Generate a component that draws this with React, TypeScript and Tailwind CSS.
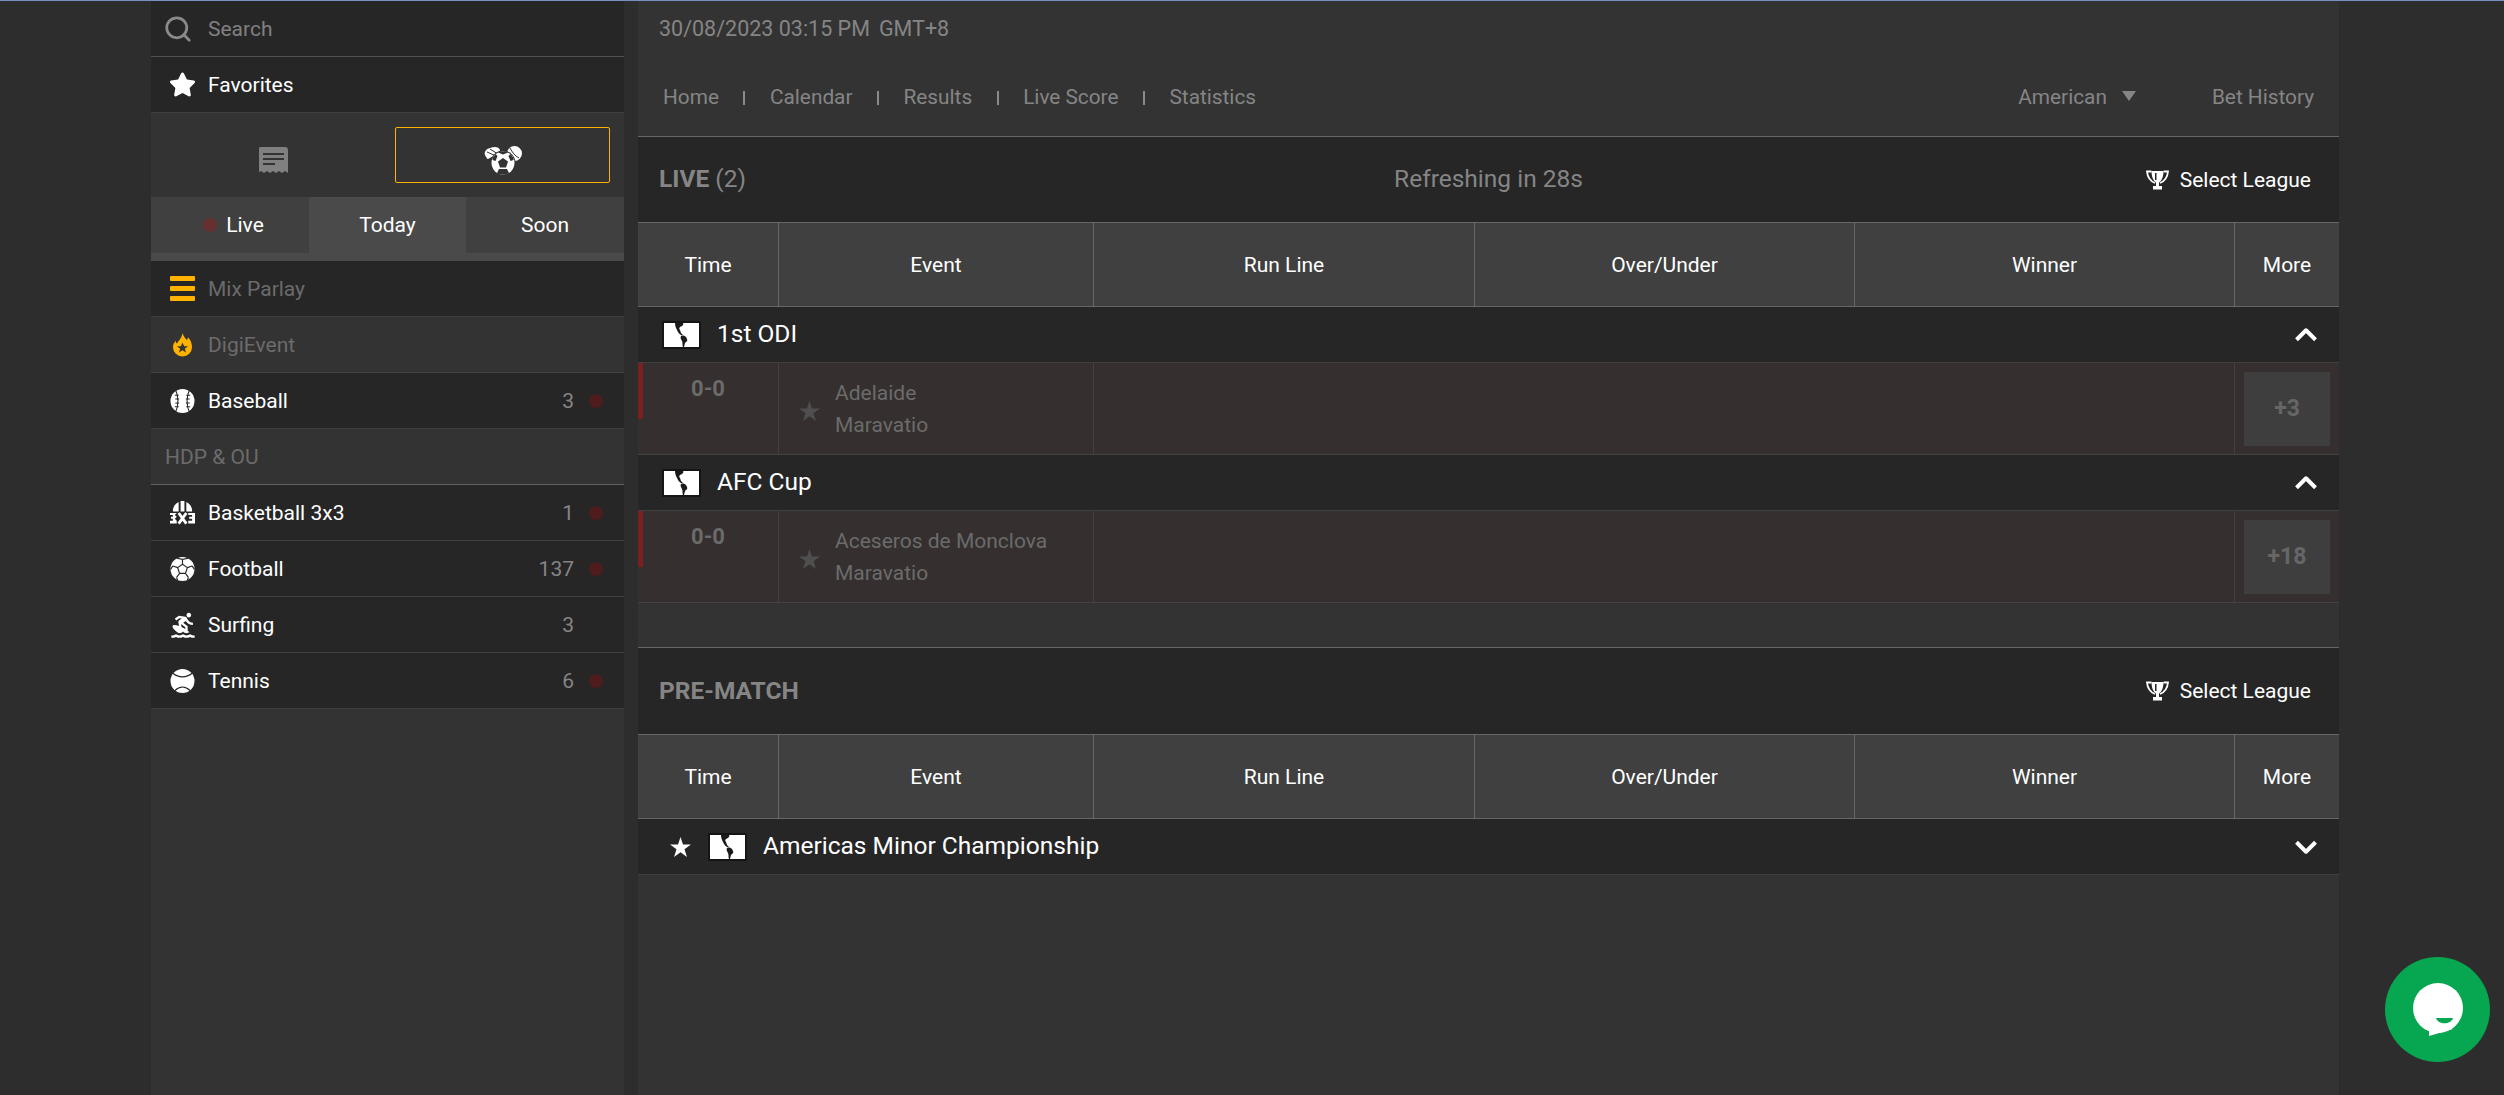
import { ChevronDown, ChevronUp, Search } from "lucide-react";
import { FaStar } from "react-icons/fa";
import { MdSurfing } from "react-icons/md";

const columns = ["Time", "Event", "Run Line", "Over/Under", "Winner", "More"];

function ReceiptIcon() {
    return (
        <svg viewBox="0 0 29 26" className="w-[29px] h-[26px]">
            <path fill="#808080" d="M3 0h23a3 3 0 0 1 3 3v23l-3-2-3 2-3-2-3 2-3-2-3 2-3-2-3 2-3-2-3 2V3a3 3 0 0 1 3-3z" />
            <path stroke="#333" strokeWidth="2" d="M4 7h21M4 12h21M4 17h12" />
        </svg>
    );
}

function SportsIcon() {
    return (
        <svg viewBox="0 0 38 29" className="w-[38px] h-[29px]">
            <path fill="#fff" d="M1 9c-1-3 1-6 5-7 5-2 9-1 10 2l-1 3-11 6C3 13 2 11 1 9z" />
            <path fill="none" stroke="#333" strokeWidth="1" d="M3 6l9 4M6 3l8 5" />
            <circle cx="30.500" cy="7.500" r="7.500" fill="#fff" />
            <path fill="none" stroke="#333" strokeWidth="1" d="M26 2c2 4 5 8 9 10" />
            <circle cx="19" cy="17" r="12.500" fill="#333" />
            <circle cx="19" cy="17" r="11.500" fill="#fff" />
            <path fill="#333" d="M19 12l5 3.500-2 6h-6l-2-6zM14 6.500l5 2 5-2-1-1h-8zM8.500 14l3 1 2-5-2-2-3 4zM29.500 14l-3 1-2-5 2-2 3 4zM13 27l2-4h8l2 4-3 1.500h-7z" />
        </svg>
    );
}

function FlameIcon() {
    return (
        <svg viewBox="0 0 20 25" className="w-[19px] h-[25px]">
            <path fill="#ffb300" d="M10 0c1 4 3 6 5 8 0-1 0-2 1-3 3 3 4 7 4 10.500a10 9.500 0 0 1-20 0c0-3 1-5 3-7 0 1 0 2 1 3 2-3 6-7 6-11.500z" />
            <path fill="#333" d="M10 10.500l1.700 3.800h4.100l-3.300 2.600 1.200 4.100-3.700-2.400-3.700 2.400 1.200-4.100-3.300-2.600h4.100z" />
        </svg>
    );
}

function BaseballIcon() {
    return (
        <svg viewBox="0 0 26 26" className="w-[26px] h-[26px]">
            <circle cx="13" cy="13" r="12.500" fill="#fff" />
            <path fill="none" stroke="#262626" strokeWidth="1.100" d="M6 2c3 6 3 16 0 22M20 2c-3 6-3 16 0 22" />
            <path fill="none" stroke="#262626" strokeWidth="1.100" d="M5 7h4M5.500 11h4M5.500 15h4M5 19h4M17 7h4M16.500 11h4M16.500 15h4M17 19h4" />
        </svg>
    );
}

function FootballIcon() {
    return (
        <svg viewBox="0 0 26 26" className="w-[26px] h-[26px]">
            <circle cx="13" cy="13" r="12.500" fill="#fff" />
            <path fill="none" stroke="#262626" strokeWidth="1.200" d="M13 8l5 3.600-1.900 5.900H9.900L8 11.600zM13 8V3M18 11.600l5-1.800M16.100 17.500l3 4.200M9.900 17.500l-3 4.200M8 11.600L3 9.800M7 1.800L13 3l6-1.200M23 9.800l2.400 3.600M19.100 21.700l-1 3.300M6.900 21.700l1 3.300M3 9.800L0.600 13.400" />
        </svg>
    );
}

function Basket3x3Icon() {
    return (
        <svg viewBox="0 0 26 25" className="w-[26px] h-[25px]">
            <path fill="#fff" d="M3 11.500a11 11 0 0 1 6-10V11.500zM11 0.500h4V11.500h-4zM17 1.500A11 11 0 0 1 23 11.500h-6z" />
            <path fill="#fff" d="M0 13h7l-2 2 2 2-2 2 2 2v3H0v-3h3v-2H1v-2h2v-2H0zM19 13h7v11h-7v-3h4v-2h-3v-2h3v-2h-4z" />
            <path stroke="#fff" strokeWidth="3" d="M9 13l8 11M17 13L9 24" />
        </svg>
    );
}

function TennisIcon() {
    return (
        <svg viewBox="0 0 26 26" className="w-[26px] h-[26px]">
            <circle cx="13" cy="13" r="12.500" fill="#fff" />
            <path fill="none" stroke="#262626" strokeWidth="1.200" d="M3 5c6 5 14 5 20 0M5 23c5-5 11-5 16 0" />
        </svg>
    );
}

function HamburgerIcon() {
    return (
        <div className="w-[25px] flex flex-col gap-[5px]">
            <div className="h-[5px] rounded-[1px] bg-[#ffb300]"></div>
            <div className="h-[5px] rounded-[1px] bg-[#ffb300]"></div>
            <div className="h-[5px] rounded-[1px] bg-[#ffb300]"></div>
        </div>
    );
}

function TrophyIcon() {
    return (
        <svg viewBox="0 0 23 20" className="w-[23px] h-[20px]">
            <path fill="none" stroke="#fff" strokeWidth="1.800" d="M5.500 1.500H1C1.500 7 4 11 9 13M17.500 1.500H22C21.500 7 19 11 14 13" />
            <path fill="#fff" d="M5.500 1h12c0 6-2 10-4.500 11.500V16h3v3.500H7V16h3v-3.500C7.500 11 5.500 7 5.500 1z" />
            <path fill="#262626" d="M9 3h1.500v7H9z" />
        </svg>
    );
}

function SharpStar({ color }: { color: string }) {
    return (
        <svg viewBox="0 0 22 21" className="w-[21px] h-[20px] shrink-0">
            <polygon fill={color} points="11,0 13.600,7.900 22,7.900 15.200,12.900 17.800,21 11,16 4.200,21 6.800,12.900 0,7.900 8.400,7.900" />
        </svg>
    );
}

function Flag() {
    return (
        <div className="w-[39px] h-[28px] border-2 border-[#151515] bg-white shrink-0">
            <svg viewBox="0 0 35 24" className="w-full h-full">
                <path fill="#1a1a1a" d="M11 0h8c1 1 0 2-1 3l-2 1c-1 1-1 2 0 3l1 3 2 2-2 0c-2-1-3-3-4-5s-2-4-2-7zM17 13c2-1 4 0 5 1l1 2c1 2-1 3-2 4l-1 4h-1c-1-2 0-4-1-6s-2-3-1-5z" />
            </svg>
        </div>
    );
}

function SideRow({ icon, label, count, live, muted, alt }: { icon: React.ReactNode; label: string; count?: number; live?: boolean; muted?: boolean; alt?: boolean }) {
    return (
        <div className={`h-[56px] flex items-center border-b border-[#404040] ${alt ? "bg-[#333333]" : "bg-[#262626]"}`}>
            <div className="w-[25px] ml-[19px] mr-[13px] flex justify-center shrink-0">{icon}</div>
            <span className={`pt-[2px] text-[21px] ${muted ? "text-[#6b6b6b]" : "text-white"}`}>{label}</span>
            <span className="pt-[2px] ml-auto text-[21px] text-[#858585]">{count}</span>
            <div className="w-[14px] h-[14px] ml-[15px] mr-[21px] rounded-full">
                {live && <div className="w-[14px] h-[14px] rounded-full bg-[#4e1c1c]"></div>}
            </div>
        </div>
    );
}

function TableHead() {
    return (
        <div className="grid grid-cols-[140px_315px_381px_380px_380px_105px] h-[85px] bg-[#404040] border-y border-[#666666]">
            {columns.map((name, i) => (
                <div key={name} className={`pt-[2px] flex items-center justify-center text-[21px] text-white ${i > 0 ? "border-l border-[#666666]" : ""}`}>{name}</div>
            ))}
        </div>
    );
}

function SelectLeague() {
    return (
        <div className="flex items-center gap-[11px] text-[21px] text-white mr-[28px]">
            <TrophyIcon />
            <span className="pt-[2px]">Select League</span>
        </div>
    );
}

function League({ name }: { name: string }) {
    return (
        <div className="h-[56px] bg-[#262626] border-b border-[#404040] flex items-center pl-[24px] pr-[14px]">
            <Flag />
            <span className="ml-[16px] text-[24.500px] text-white">{name}</span>
            <ChevronUp className="ml-auto text-white" size={38} strokeWidth={2.500} strokeLinecap="butt" />
        </div>
    );
}

function Match({ home, away, more }: { home: string; away: string; more: string }) {
    return (
        <div className="relative grid grid-cols-[140px_315px_1141px_105px] h-[92px] bg-[#352f2f] border-b border-[#454141]">
            <div className="absolute left-0 top-0 w-[5px] h-[56px] bg-[#7a2020]"></div>
            <div className="pt-[9px] text-center text-[22px] font-bold text-[#6b6b6b]">0-0</div>
            <div className="border-l border-[#454141] flex items-center pl-[20px] gap-[15px]">
                <div className="mt-[4px]"><SharpStar color="#4f4f4f" /></div>
                <div className="text-[21px] leading-[32px] text-[#6b6b6b] whitespace-nowrap">
                    <div>{home}</div>
                    <div>{away}</div>
                </div>
            </div>
            <div className="border-l border-[#454141]"></div>
            <div className="border-l border-[#454141] pl-[9px] pt-[9px]">
                <div className="w-[86px] h-[74px] bg-[#3e3e3e] flex items-center justify-center text-[23px] font-bold text-[#666666]">{more}</div>
            </div>
        </div>
    );
}

function NavSep() {
    return <span className="w-[2px] h-[14px] bg-[#8a8a8a] mx-[24.500px]"></span>;
}

export default function App() {
    return (
        <div className="relative h-screen overflow-hidden bg-[#2d2d2d] border-t border-[#7a8fc4] font-['Roboto',sans-serif] flex pl-[151px]">
            <aside className="w-[473px] h-full bg-[#333333] shrink-0">
                <div className="h-[56px] bg-[#262626] border-b border-[#505050] flex items-center pl-[12px] gap-[15px] text-[21px] text-[#808080]">
                    <Search size={30} strokeWidth={2.200} className="text-[#8a8a8a]" />
                    <span className="pt-[2px]">Search</span>
                </div>
                <div className="h-[56px] bg-[#262626] border-b border-[#404040] flex items-center pl-[18px] gap-[12px] text-[21px] text-white">
                    <FaStar size={27} />
                    <span className="pt-[2px]">Favorites</span>
                </div>
                <div className="h-[84px] flex items-center pr-[14px] gap-[11px]">
                    <div className="flex-1 flex justify-center pl-[12px] pt-[10px]"><ReceiptIcon /></div>
                    <div className="w-[215px] h-[56px] border border-[#ffb300] rounded-[2px] flex items-center justify-center pt-[11px]"><SportsIcon /></div>
                </div>
                <div className="h-[64px] bg-[#4a4a4a]">
                    <div className="grid grid-cols-[158px_157px_158px] h-[56px] text-[21px] text-white">
                        <div className="bg-[#404040] flex items-center justify-center gap-[9px] pl-[7px]">
                            <div className="w-[14px] h-[14px] rounded-full bg-[#673030]"></div>
                            <span className="pt-[2px]">Live</span>
                        </div>
                        <div className="bg-[#4a4a4a] flex items-center justify-center pt-[2px]">Today</div>
                        <div className="bg-[#404040] flex items-center justify-center pt-[2px]">Soon</div>
                    </div>
                </div>
                <SideRow icon={<HamburgerIcon />} label="Mix Parlay" muted />
                <SideRow icon={<FlameIcon />} label="DigiEvent" muted alt />
                <SideRow icon={<BaseballIcon />} label="Baseball" count={3} live />
                <div className="h-[56px] bg-[#333333] border-b border-[#606060] flex items-center pl-[14px] pt-[2px] text-[21px] text-[#6b6b6b]">HDP &amp; OU</div>
                <SideRow icon={<Basket3x3Icon />} label="Basketball 3x3" count={1} live />
                <SideRow icon={<FootballIcon />} label="Football" count={137} live />
                <SideRow icon={<MdSurfing size={28} className="text-white shrink-0" />} label="Surfing" count={3} />
                <SideRow icon={<TennisIcon />} label="Tennis" count={6} live />
            </aside>

            <main className="w-[1701px] h-full ml-[14px] bg-[#333333] shrink-0">
                <div className="h-[136px] border-b border-[#666666] pl-[21px] pr-[25px]">
                    <div className="h-[56px] flex items-center pt-[1px] text-[21.500px] text-[#858585]">
                        <span>30/08/2023 03:15 PM</span>
                        <span className="ml-[9px]">GMT+8</span>
                    </div>
                    <div className="h-[79px] flex items-center pt-[2px] text-[20.800px] text-[#858585]">
                        <span className="ml-[4px]">Home</span>
                        <NavSep />
                        <span>Calendar</span>
                        <NavSep />
                        <span>Results</span>
                        <NavSep />
                        <span>Live Score</span>
                        <NavSep />
                        <span>Statistics</span>
                        <span className="ml-auto">American</span>
                        <span className="ml-[15px] mb-[4px] border-x-[7px] border-x-transparent border-t-[10px] border-t-[#858585]"></span>
                        <span className="ml-[76px]">Bet History</span>
                    </div>
                </div>
                <div className="h-[85px] bg-[#262626] grid grid-cols-3 items-center text-[24.500px] text-[#858585]">
                    <div className="pl-[21px]"><b>LIVE</b> (2)</div>
                    <div className="text-center">Refreshing in 28s</div>
                    <div className="flex justify-end"><SelectLeague /></div>
                </div>
                <TableHead />
                <League name="1st ODI" />
                <Match home="Adelaide" away="Maravatio" more="+3" />
                <League name="AFC Cup" />
                <Match home="Aceseros de Monclova" away="Maravatio" more="+18" />

                <div className="h-[44px]"></div>
                <div className="h-[87px] bg-[#262626] border-t border-[#666666] flex items-center justify-between pl-[21px]">
                    <b className="text-[24.500px] text-[#858585]">PRE-MATCH</b>
                    <SelectLeague />
                </div>
                <TableHead />
                <div className="h-[56px] bg-[#262626] border-b border-[#404040] flex items-center pl-[32px] pr-[14px]">
                    <SharpStar color="#ffffff" />
                    <div className="ml-[17px]"><Flag /></div>
                    <span className="ml-[16px] text-[24.500px] text-white">Americas Minor Championship</span>
                    <ChevronDown className="ml-auto text-white" size={38} strokeWidth={2.500} strokeLinecap="butt" />
                </div>
            </main>

            <div className="absolute right-[14px] bottom-[33px] w-[105px] h-[105px] rounded-full bg-[#07a650] flex items-center justify-center">
                <svg viewBox="0 0 50 53" className="w-[50px] h-[53px]">
                    <circle cx="25" cy="25" r="25" fill="#fff" />
                    <path fill="#fff" d="M16 44v9l24-7z" />
                    <path fill="#07a650" d="M23 35h17c-2 7-15 7-17 0z" />
                </svg>
            </div>
        </div>
    );
}
